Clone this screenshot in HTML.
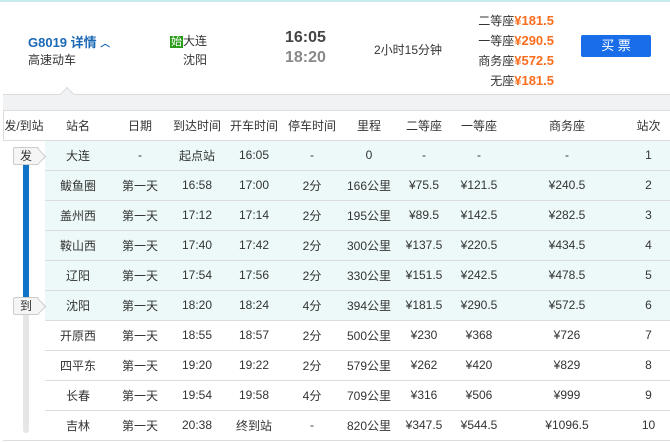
<!DOCTYPE html>
<html><head><meta charset="utf-8"><style>
*{margin:0;padding:0;box-sizing:border-box}
body{width:670px;height:443px;background:#fff;font-family:"Liberation Sans","Noto Sans CJK SC",sans-serif;font-size:12px;color:#333;position:relative;overflow:hidden}
.a{position:absolute;white-space:nowrap}
.p{color:#fa6d1e;font-weight:bold;font-size:13px}
table{position:absolute;left:3px;top:111px;width:667px;border-collapse:collapse;table-layout:fixed}
td,th{height:30px;text-align:center;font-weight:normal;border-bottom:1px solid #dcdcdc;padding:0}
th{height:29px;border-bottom:1px solid #dcdcdc}
tr.h td{background:#edf9f9}
td.f{background:#fff!important;border-bottom:none}
.tag{position:absolute;width:26px;height:18px;border:1px solid #ccc;background:#f5f5f5;border-radius:2px;text-align:center;line-height:16px;font-size:12px}
.tag:after{content:"";position:absolute;right:-6px;top:3px;width:10px;height:10px;background:#f5f5f5;border-right:1px solid #ccc;border-top:1px solid #ccc;transform:rotate(45deg)}
</style></head><body>
<div class="a" style="left:0;top:0;width:670px;height:2px;background:#c7ecf0"></div>
<div class="a" style="left:28px;top:32px;color:#1b68b5;font-weight:bold;font-size:13px">G8019 详情 <span style="font-size:10px">︿</span></div>
<div class="a" style="left:28px;top:51px">高速动车</div>
<div class="a" style="left:170px;top:32px"><span style="background:#2b9b1b;color:#fff;font-size:11px;padding:0 1px">始</span>大连</div>
<div class="a" style="left:183px;top:51px">沈阳</div>
<div class="a" style="left:285px;top:29px;font-weight:bold;font-size:16px;color:#444">16:05</div>
<div class="a" style="left:285px;top:49px;font-weight:bold;font-size:16px;color:#888">18:20</div>
<div class="a" style="left:374px;top:41px">2小时15分钟</div>
<div class="a" style="right:116px;top:11px;text-align:right;line-height:19px">二等座<span class="p">¥181.5</span><br>一等座<span class="p">¥290.5</span><br>商务座<span class="p">¥572.5</span><br>无座<span class="p">¥181.5</span></div>
<div class="a" style="left:581px;top:35px;width:70px;height:22px;background:#1a6de8;border-radius:2px;color:#fff;text-align:center;line-height:22px;font-size:13px">买 票</div>
<div class="a" style="left:3px;top:94px;width:667px;height:17px;background:#f0f2f4;border-top:1px solid #dcdcdc;border-bottom:1px solid #dcdcdc"></div>
<div class="a" style="left:62px;top:89px;width:10px;height:10px;background:#f0f2f4;border-left:1px solid #dcdcdc;border-top:1px solid #dcdcdc;transform:rotate(45deg)"></div>
<div class="a" style="left:3px;top:111px;width:1px;height:330px;background:#dcdcdc"></div>
<table>
<colgroup><col style="width:42px"><col style="width:66px"><col style="width:58px"><col style="width:56px"><col style="width:58px"><col style="width:58px"><col style="width:56px"><col style="width:54px"><col style="width:56px"><col style="width:120px"><col></colgroup>
<tr><th>发/到站</th><th>站名</th><th>日期</th><th>到达时间</th><th>开车时间</th><th>停车时间</th><th>里程</th><th>二等座</th><th>一等座</th><th>商务座</th><th>站次</th></tr>
<tr class="h"><td class="f"></td><td>大连</td><td>-</td><td>起点站</td><td>16:05</td><td>-</td><td>0</td><td>-</td><td>-</td><td>-</td><td>1</td></tr>
<tr class="h"><td class="f"></td><td>鲅鱼圈</td><td>第一天</td><td>16:58</td><td>17:00</td><td>2分</td><td>166公里</td><td>¥75.5</td><td>¥121.5</td><td>¥240.5</td><td>2</td></tr>
<tr class="h"><td class="f"></td><td>盖州西</td><td>第一天</td><td>17:12</td><td>17:14</td><td>2分</td><td>195公里</td><td>¥89.5</td><td>¥142.5</td><td>¥282.5</td><td>3</td></tr>
<tr class="h"><td class="f"></td><td>鞍山西</td><td>第一天</td><td>17:40</td><td>17:42</td><td>2分</td><td>300公里</td><td>¥137.5</td><td>¥220.5</td><td>¥434.5</td><td>4</td></tr>
<tr class="h"><td class="f"></td><td>辽阳</td><td>第一天</td><td>17:54</td><td>17:56</td><td>2分</td><td>330公里</td><td>¥151.5</td><td>¥242.5</td><td>¥478.5</td><td>5</td></tr>
<tr class="h"><td class="f"></td><td>沈阳</td><td>第一天</td><td>18:20</td><td>18:24</td><td>4分</td><td>394公里</td><td>¥181.5</td><td>¥290.5</td><td>¥572.5</td><td>6</td></tr>
<tr><td class="f"></td><td>开原西</td><td>第一天</td><td>18:55</td><td>18:57</td><td>2分</td><td>500公里</td><td>¥230</td><td>¥368</td><td>¥726</td><td>7</td></tr>
<tr><td class="f"></td><td>四平东</td><td>第一天</td><td>19:20</td><td>19:22</td><td>2分</td><td>579公里</td><td>¥262</td><td>¥420</td><td>¥829</td><td>8</td></tr>
<tr><td class="f"></td><td>长春</td><td>第一天</td><td>19:54</td><td>19:58</td><td>4分</td><td>709公里</td><td>¥316</td><td>¥506</td><td>¥999</td><td>9</td></tr>
<tr><td class="f"></td><td>吉林</td><td>第一天</td><td>20:38</td><td>终到站</td><td>-</td><td>820公里</td><td>¥347.5</td><td>¥544.5</td><td>¥1096.5</td><td>10</td></tr>
</table>
<div class="a" style="left:23px;top:163px;width:6px;height:136px;background:#1173c8"></div>
<div class="a" style="left:23px;top:299px;width:6px;height:134px;background:#e6e6e6;border-radius:0 0 3px 3px"></div>
<div class="tag" style="left:13px;top:147px">发</div>
<div class="tag" style="left:13px;top:297px">到</div>
<div class="a" style="left:3px;top:440px;width:667px;height:1px;background:#dcdcdc"></div>
</body></html>
